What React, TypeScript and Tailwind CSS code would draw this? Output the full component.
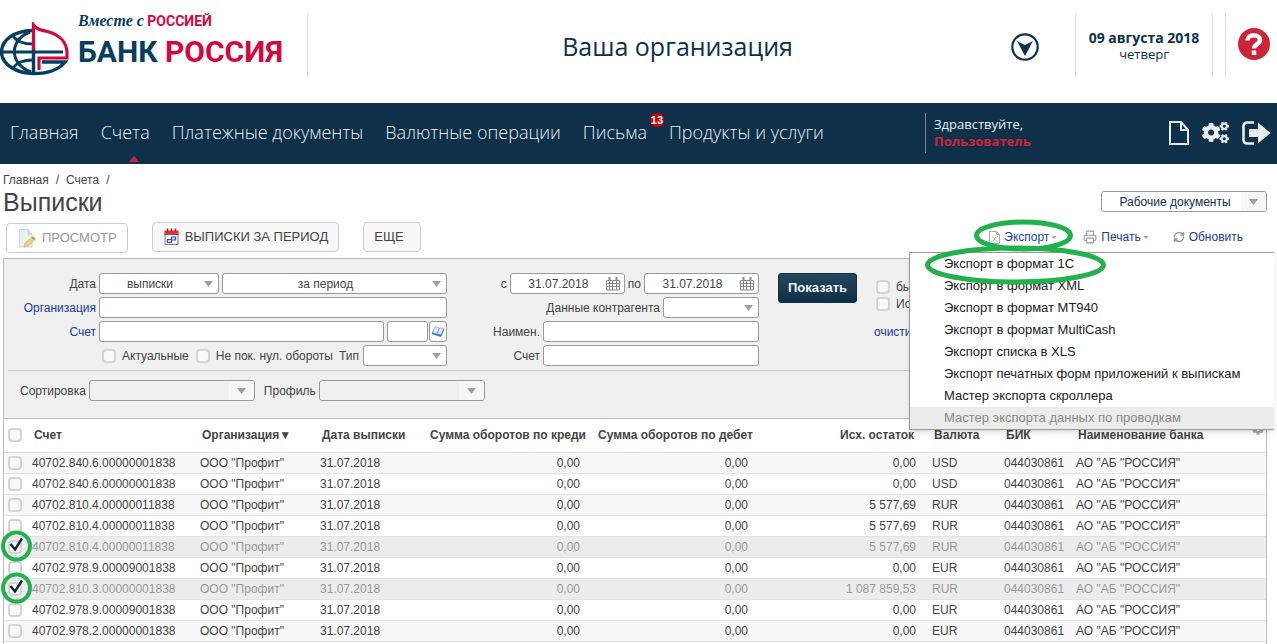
import React from "react";
import { FaCog, FaCogs } from "react-icons/fa";
import { Printer, RefreshCw } from "lucide-react";

const navItems = [
  { title: "Главная" },
  { title: "Счета", active: true },
  { title: "Платежные документы" },
  { title: "Валютные операции" },
  { title: "Письма", badge: 13 },
  { title: "Продукты и услуги" },
];

const exportItems = [
  "Экспорт в формат 1С",
  "Экспорт в формат XML",
  "Экспорт в формат MT940",
  "Экспорт в формат MultiCash",
  "Экспорт списка в XLS",
  "Экспорт печатных форм приложений к выпискам",
  "Мастер экспорта скроллера",
];

const rows = [
  { account: "40702.840.6.00000001838", balance: "0,00", currency: "USD" },
  { account: "40702.840.6.00000001838", balance: "0,00", currency: "USD" },
  { account: "40702.810.4.00000011838", balance: "5 577,69", currency: "RUR" },
  { account: "40702.810.4.00000011838", balance: "5 577,69", currency: "RUR" },
  { account: "40702.810.4.00000011838", balance: "5 577,69", currency: "RUR", selected: true },
  { account: "40702.978.9.00009001838", balance: "0,00", currency: "EUR" },
  { account: "40702.810.3.00000001838", balance: "1 087 859,53", currency: "RUR", selected: true },
  { account: "40702.978.9.00009001838", balance: "0,00", currency: "EUR" },
  { account: "40702.978.2.00000001838", balance: "0,00", currency: "EUR" },
];

const fieldBase = "h-[21px] rounded-[3px] border border-[#999] text-[12px] outline-none";
const field = `${fieldBase} bg-white text-[#444]`;
const checkbox = "block size-[14px] shrink-0 appearance-none rounded-[4px] border-2 border-[#d4d4d4] bg-[#f8f8f8]";

const Logo = () => (
  <svg width="70" height="54" viewBox="0 0 70 54" fill="none" aria-hidden="true">
    <g stroke="#043e60" strokeWidth="3">
      <path d="M32 8.500C14 9 1.500 18 1.500 30S16 51.500 34 51.500c13 0 25-4 31-11.500H42" strokeWidth="3.400" />
      <path d="M0 30h63" strokeWidth="3" />
      <path d="M33.500 26v26" strokeWidth="3.400" />
      <path d="M30 10C9 18 9 42 31 50M13 14c4 6 11 8 20 8M13 46c4-6 11-8 20-8" />
    </g>
    <path
      d="M33.500 28V3c3 4 7 5 14 6.500C60 13 67 21 67 31v5H39v12"
      stroke="#d3083f"
      strokeWidth="3.200"
    />
  </svg>
);

const CalendarGrid = () => (
  <svg width="14" height="14" viewBox="0 0 14 14" fill="none" stroke="#888" aria-hidden="true">
    <path d="M.5 3.500h13v9.500H.5zM.5 6.500h13M.5 9.500h13M3.500 4v9M6.500 4v9M10.500 4v9" />
    <path d="M3.500 0v3M10.500 0v3" strokeWidth="2" />
  </svg>
);

type SelectProps = { label: string; value?: string; className: string; button?: boolean; dark?: boolean };

const Select = ({ label, value = "", className, button, dark }: SelectProps) => (
  <div className={`relative ${className}`}>
    <select
      aria-label={label}
      className={`${fieldBase} block w-full appearance-none pr-[18px] text-center ${button ? "bg-transparent" : "bg-white"} ${dark ? "text-[#0e3049]" : "text-[#444]"}`}
    >
      <option>{value}</option>
    </select>
    <span
      className={`pointer-events-none absolute inset-y-px right-px flex items-center justify-center rounded-r-[2px] ${button ? "w-[25px] bg-[#f7f7f7]" : "w-[19px]"}`}
    >
      <svg width="9" height="6" viewBox="0 0 9 6" fill="#a0a0a0" aria-hidden="true">
        <path d="M0 0h9L4.500 6z" />
      </svg>
    </span>
  </div>
);

const DateField = ({ label }: { label: string }) => (
  <div className={`${field} flex w-[115px] items-center pr-1`}>
    <input aria-label={label} defaultValue="31.07.2018" className="min-w-0 flex-1 text-center outline-none" />
    <button aria-label="Календарь">
      <CalendarGrid />
    </button>
  </div>
);

const Header = () => (
  <header className="flex h-[103px] items-start pt-[13px] text-[#0e3049]">
    <a href="#" className="flex h-[65px] w-[308px] items-start gap-2 border-r border-[#ddd]">
      <div className="pt-[9px]">
        <Logo />
      </div>
      <div className="whitespace-nowrap font-[Roboto,sans-serif] font-bold text-[#d3083f]">
        <div className="text-[14px] leading-4">
          <span className="font-['Liberation_Serif',serif] text-[16px] italic text-[#043e60]">Вместе с</span> РОССИЕЙ
        </div>
        <div className="text-[30px] leading-[46px]">
          <span className="text-[#043e60]">БАНК</span> РОССИЯ
        </div>
      </div>
    </a>
    <div className="flex h-[68px] flex-1 items-center justify-center pl-9 font-['Open_Sans',sans-serif] text-[25px]">
      Ваша организация
    </div>
    <button aria-label="Сменить организацию" className="mt-5">
      <svg width="28" height="28" viewBox="0 0 28 28" fill="none" aria-hidden="true">
        <circle cx="14" cy="14" r="12.700" stroke="#0e3049" strokeWidth="2.200" />
        <path d="M6 8l8 4 8-4-8 15z" fill="#0e3049" />
      </svg>
    </button>
    <div className="ml-9 mr-3 flex h-[65px] w-[138px] flex-col items-center border-x border-[#ddd] pt-4 font-['Open_Sans',sans-serif] text-[13px] leading-[17px]">
      <b className="text-[14px]">09 августа 2018</b>
      <span>четверг</span>
    </div>
    <div className="flex h-[65px] w-[52px] justify-end border-l border-[#ddd] pr-[7px] pt-[15px]">
      <button aria-label="Помощь" className="flex size-8 items-center justify-center rounded-full bg-[#ce2439] text-white">
        <svg width="20" height="24" viewBox="0 0 20 24" fill="none" stroke="currentColor" strokeWidth="4.500" aria-hidden="true">
          <path d="M3.500 8.500C3.500 1.500 16 1.500 16 8c0 4-6 4-6 8.500" />
          <path d="M10 18.500V23" />
        </svg>
      </button>
    </div>
  </header>
);

const Navbar = () => (
  <nav className="flex h-[61px] items-center bg-[#0e3049] pb-[2px] font-['Open_Sans',sans-serif] text-[#e8edf0]">
    <ul className="flex h-full flex-1 gap-[22px] whitespace-nowrap pl-[10px] text-[18px] font-light">
      {navItems.map((item) => (
        <li key={item.title} className="relative flex items-center">
          <a href="#">{item.title}</a>
          {item.active && (
            <svg className="absolute bottom-0 left-1/2 ml-1" width="10" height="6" viewBox="0 0 10 6" aria-hidden="true">
              <path d="M0 6l5-6 5 6z" fill="#ce2439" />
            </svg>
          )}
          {item.badge && (
            <span className="absolute -right-[17px] top-[10px] flex size-[14px] items-center justify-center rounded-full bg-[#d40000] font-['Liberation_Sans',sans-serif] text-[11px] font-bold text-white">
              {item.badge}
            </span>
          )}
        </li>
      ))}
    </ul>
    <div className="flex h-10 w-[244px] shrink-0 flex-col justify-center border-l border-[#71838f] pl-2 text-[13px] leading-[17px]">
      <span>Здравствуйте,</span>
      <b className="text-[#ce2439]">Пользователь</b>
    </div>
    <div className="flex items-center gap-[13px] pr-[6px]">
      <button aria-label="Документы">
        <svg width="20" height="24" viewBox="0 0 20 24" fill="none" stroke="currentColor" strokeWidth="2" aria-hidden="true">
          <path d="M1 1h11l7 8v14H1zM12 1v8h7" />
        </svg>
      </button>
      <button aria-label="Настройки">
        <FaCogs size={27} />
      </button>
      <button aria-label="Выход">
        <svg width="29" height="24" viewBox="0 0 29 24" aria-hidden="true">
          <path d="M12 1.500H5.500q-4 0-4 4v13q0 4 4 4H12" fill="none" stroke="currentColor" strokeWidth="2.600" />
          <path d="M7 8h9V1.500L28.500 12 16 22.500V16H7z" fill="currentColor" />
        </svg>
      </button>
    </div>
  </nav>
);

const SmallCaret = () => (
  <svg className="ml-[2px]" width="6" height="3" viewBox="0 0 6 3" fill="#aaa" aria-hidden="true">
    <path d="M0 0h6L3 3z" />
  </svg>
);

const Toolbar = () => {
  const button = "flex h-[30px] items-center rounded-[4px] border border-[#ccc] text-[13px] uppercase";
  return (
    <div className="flex items-start pb-[5px] pl-[3px] pr-6">
      <button className={`${button} mt-px gap-[5px] px-[10px] text-[#999]`}>
        <svg width="20" height="22" viewBox="0 0 20 22" aria-hidden="true">
          <path d="M2.500 2.500H11l4 4.500v13H2.500z" fill="#e9f2ef" stroke="#c8d5d2" />
          <path d="M11 2.500V7h4" fill="#cfe3df" stroke="#b9cfcb" />
          <path d="M7 20l1-4 7-6 3 3-7 6z" fill="#ecd27a" stroke="#c9a95a" strokeWidth=".6" />
          <path d="M14.500 10.500l1.500-1.300 2.700 2.700-1.400 1.400z" fill="#e0776e" />
        </svg>
        Просмотр
      </button>
      <button className={`${button} ml-6 gap-[5px] bg-[#f8f8f8] px-[10px] text-[#444]`}>
        <svg width="17" height="18" viewBox="0 0 17 18" aria-hidden="true">
          <path d="M2 5h13v11.500H2z" fill="#f4f6ff" stroke="#777" />
          <path d="M1.500 2.500h14V7h-14z" fill="#dc3535" />
          <path d="M4.500.5v3M8.500.5v3M12.500.5v3" stroke="#a21d1d" strokeWidth="1.400" />
          <path d="M4.500 11.500h4v3h-4zM8.500 9h4v3h-4z" fill="#d9e2ff" stroke="#3355c4" strokeWidth="1.200" />
        </svg>
        Выписки за период
      </button>
      <button className={`${button} ml-6 bg-[#f8f8f8] pl-[10px] pr-4 text-[#444]`}>Еще</button>
      <div className="ml-auto mt-[6px] flex items-center text-[12px] leading-[18px] text-[#1a3a9c]">
        <button className="flex items-center">
          <svg className="mr-1" width="11" height="13" viewBox="0 0 11 13" fill="none" stroke="#aaa" aria-hidden="true">
            <path d="M.5.5h7l3 3v9H.5zM7.500.5v3h3M3 5.500l5 5M8 5.500l-5 5" />
          </svg>
          Экспорт
          <SmallCaret />
        </button>
        <button className="ml-[26px] flex items-center">
          <Printer className="mr-1" size={14} color="#999" />
          Печать
          <SmallCaret />
        </button>
        <button className="ml-6 flex items-center">
          <RefreshCw className="mr-1" size={12} color="#999" strokeWidth={3} />
          Обновить
        </button>
      </div>
    </div>
  );
};

const ExportMenu = () => (
  <div className="absolute right-[3px] top-[88px] z-10 w-[365px] border-y border-l border-[#999] bg-white text-[13px] text-[#222] shadow-md">
    {exportItems.map((item) => (
      <button key={item} className="block h-[22px] w-full whitespace-nowrap pl-[34px] text-left">
        {item}
      </button>
    ))}
    <button disabled className="block h-[22px] w-full whitespace-nowrap bg-[#ececec] pl-[34px] text-left text-[#888]">
      Мастер экспорта данных по проводкам
    </button>
    <svg className="pointer-events-none absolute -top-[36px] left-[10px]" width="190" height="70" viewBox="0 0 190 70" fill="none" stroke="#22b14c" strokeWidth="5" aria-hidden="true">
      <ellipse cx="103.500" cy="18.500" rx="47" ry="13.500" />
      <ellipse cx="95.500" cy="48" rx="88" ry="17" />
    </svg>
  </div>
);

const Filters = () => (
  <form className="h-[160px] border-b border-[#bbb] bg-[#f0f0f0] text-[12px] text-[#444]" onSubmit={(e) => e.preventDefault()}>
    <div className="mx-1 flex h-[112px] items-start border-b border-[#ccc] pt-[14px]">
      <div className="grid w-[439px] grid-cols-[88px_348px] items-center gap-[3px] text-right">
        <span>Дата</span>
        <div className="flex gap-[3px]">
          <Select label="Дата" value="выписки" className="w-[120px]" />
          <Select label="Период" value="за период" className="flex-1" />
        </div>
        <label htmlFor="org" className="text-[#1a3a9c]">Организация</label>
        <input id="org" className={`${field} px-1`} />
        <label htmlFor="account" className="text-[#1a3a9c]">Счет</label>
        <div className="flex gap-[3px]">
          <input id="account" className={`${field} min-w-0 flex-1 px-1`} />
          <div className="flex gap-px">
            <input aria-label="Код валюты" className={`${field} w-[41px] px-1`} />
            <button aria-label="Справочник счетов" className={`${field} flex w-[18px] items-center justify-center`}>
              <svg width="14" height="12" viewBox="0 0 14 12" aria-hidden="true">
                <path d="M4 1l9.500 2.500L10 11 .5 8z" fill="#2d77cf" />
                <path d="M4.300.5L8.500 2l4.500.2L10 8.500 6 8 1.500 6.500z" fill="#e4e9f8" stroke="#8296c4" strokeWidth=".6" />
                <path d="M8.500 2L6 8" stroke="#7d8fc0" />
              </svg>
            </button>
          </div>
        </div>
        <span />
        <div className="flex items-center pl-[3px]">
          <input id="actual" type="checkbox" className={checkbox} />
          <label htmlFor="actual" className="ml-[6px]">Актуальные</label>
          <input id="zero" type="checkbox" className={`${checkbox} ml-[7px]`} />
          <label htmlFor="zero" className="ml-[6px]">Не пок. нул. обороты</label>
          <span className="ml-auto mr-1">Тип</span>
          <Select label="Тип" className="w-[84px]" />
        </div>
      </div>
      <div className="ml-10 flex w-[272px] flex-col items-end gap-[3px]">
        <div className="flex items-center gap-[3px]">
          с
          <DateField label="с" />
          по
          <DateField label="по" />
        </div>
        <div className="flex items-center gap-[3px]">
          Данные контрагента
          <Select label="Данные контрагента" className="w-[96px]" />
        </div>
        <div className="flex items-center gap-[3px]">
          <label htmlFor="name">Наимен.</label>
          <input id="name" className={`${field} w-[216px] px-1`} />
        </div>
        <div className="flex items-center gap-[3px]">
          <label htmlFor="account2">Счет</label>
          <input id="account2" className={`${field} w-[216px] px-1`} />
        </div>
      </div>
      <button className="ml-[19px] h-[30px] w-[79px] rounded-[3px] border border-[#0e3049] bg-linear-to-b from-[#24475f] to-[#0e2f48] text-[13px] font-bold text-[#eef2f4]">
        Показать
      </button>
      <div className="ml-[17px] flex flex-col gap-[3px] pt-[7px] leading-[14px]">
        <label className="flex gap-[6px] pl-[2px]">
          <input type="checkbox" className={checkbox} /> бы
        </label>
        <label className="flex gap-[6px] pl-[2px]">
          <input type="checkbox" className={checkbox} /> Ис
        </label>
        <button type="reset" className="mt-[11px] self-start text-[#1a3a9c]">очисти</button>
      </div>
    </div>
    <div className="flex items-center pl-4 pt-[9px]">
      <span>Сортировка</span>
      <Select label="Сортировка" className="ml-[3px] w-[166px]" button />
      <span className="ml-[9px]">Профиль</span>
      <Select label="Профиль" className="ml-[3px] w-[166px]" button />
    </div>
  </form>
);

const SelectedMark = () => (
  <svg className="pointer-events-none absolute -left-[3px] -top-[7px] z-10" width="32" height="32" viewBox="0 0 32 32" fill="none" aria-hidden="true">
    <circle cx="15.500" cy="16" r="13.500" stroke="#22b14c" strokeWidth="4" />
    <path d="M9.500 14l4.500 5.500L21 8.500" stroke="#12233f" strokeWidth="2.400" />
  </svg>
);

const StatementsTable = () => (
  <table className="w-full table-fixed border-collapse whitespace-nowrap text-[12px] text-[#444]">
    <colgroup>
      <col className="w-6" />
      <col className="w-[168px]" />
      <col className="w-[120px]" />
      <col className="w-[108px]" />
      <col className="w-[168px]" />
      <col className="w-[168px]" />
      <col className="w-[168px]" />
      <col className="w-[72px]" />
      <col className="w-[72px]" />
      <col />
    </colgroup>
    <thead>
      <tr className="h-[33px] border-b border-[#ddd] text-left">
        <th className="pl-1">
          <input type="checkbox" aria-label="Выбрать все" className={checkbox} />
        </th>
        <th className="pl-[6px]">Счет</th>
        <th className="pl-[6px]">Организация▼</th>
        <th className="pl-[6px]">Дата выписки</th>
        <th className="overflow-hidden pl-[6px]">Сумма оборотов по креди</th>
        <th className="overflow-hidden pl-[6px]">Сумма оборотов по дебет</th>
        <th className="pr-[14px] text-right">Исх. остаток</th>
        <th className="pl-[6px]">Валюта</th>
        <th className="pl-[6px]">БИК</th>
        <th className="pl-[6px]">
          <div className="flex items-center justify-between pr-[2px]">
            Наименование банка
            <button aria-label="Настройка колонок" className="pb-3">
              <FaCog size={12} color="#aaa" />
            </button>
          </div>
        </th>
      </tr>
    </thead>
    <tbody>
      {rows.map((row, index) => (
        <tr
          key={index}
          className={`h-[21px] border-b border-[#e2e2e2] ${row.selected ? "bg-[#ececec] text-[#999]" : index % 2 ? "bg-white" : "bg-[#f8f8f8]"}`}
        >
          <td className="relative pl-1">
            <input type="checkbox" aria-label={row.account} defaultChecked={row.selected} className={checkbox} />
            {row.selected && <SelectedMark />}
          </td>
          <td className="pl-1">{row.account}</td>
          <td className="pl-1">ООО "Профит"</td>
          <td className="pl-1">31.07.2018</td>
          <td className="pr-3 text-right">0,00</td>
          <td className="pr-3 text-right">0,00</td>
          <td className="pr-3 text-right">{row.balance}</td>
          <td className="pl-1">{row.currency}</td>
          <td className="pl-1">044030861</td>
          <td className="pl-1">АО "АБ "РОССИЯ"</td>
        </tr>
      ))}
    </tbody>
  </table>
);

const App = () => {
  return (
    <div className="flex min-h-screen flex-col bg-white font-['Liberation_Sans',Arial,sans-serif]">
      <Header />
      <Navbar />
      <main className="relative flex flex-1 flex-col pl-[3px] pr-[10px]">
        <div className="flex items-end justify-between">
          <div>
            <div className="flex gap-[7px] pt-2 text-[12px] leading-4 text-[#444]">
              <a href="#">Главная</a>
              <span>/</span>
              <a href="#">Счета</a>
              <span>/</span>
            </div>
            <h1 className="pb-[6px] text-[25px] leading-7 text-[#444]">Выписки</h1>
          </div>
          <Select label="Документы" value="Рабочие документы" className="mb-[10px] w-[166px]" button dark />
        </div>
        <Toolbar />
        <ExportMenu />
        <div className="flex-1 border-x border-t border-[#bbb]">
          <Filters />
          <StatementsTable />
        </div>
      </main>
    </div>
  );
};

export default App;
